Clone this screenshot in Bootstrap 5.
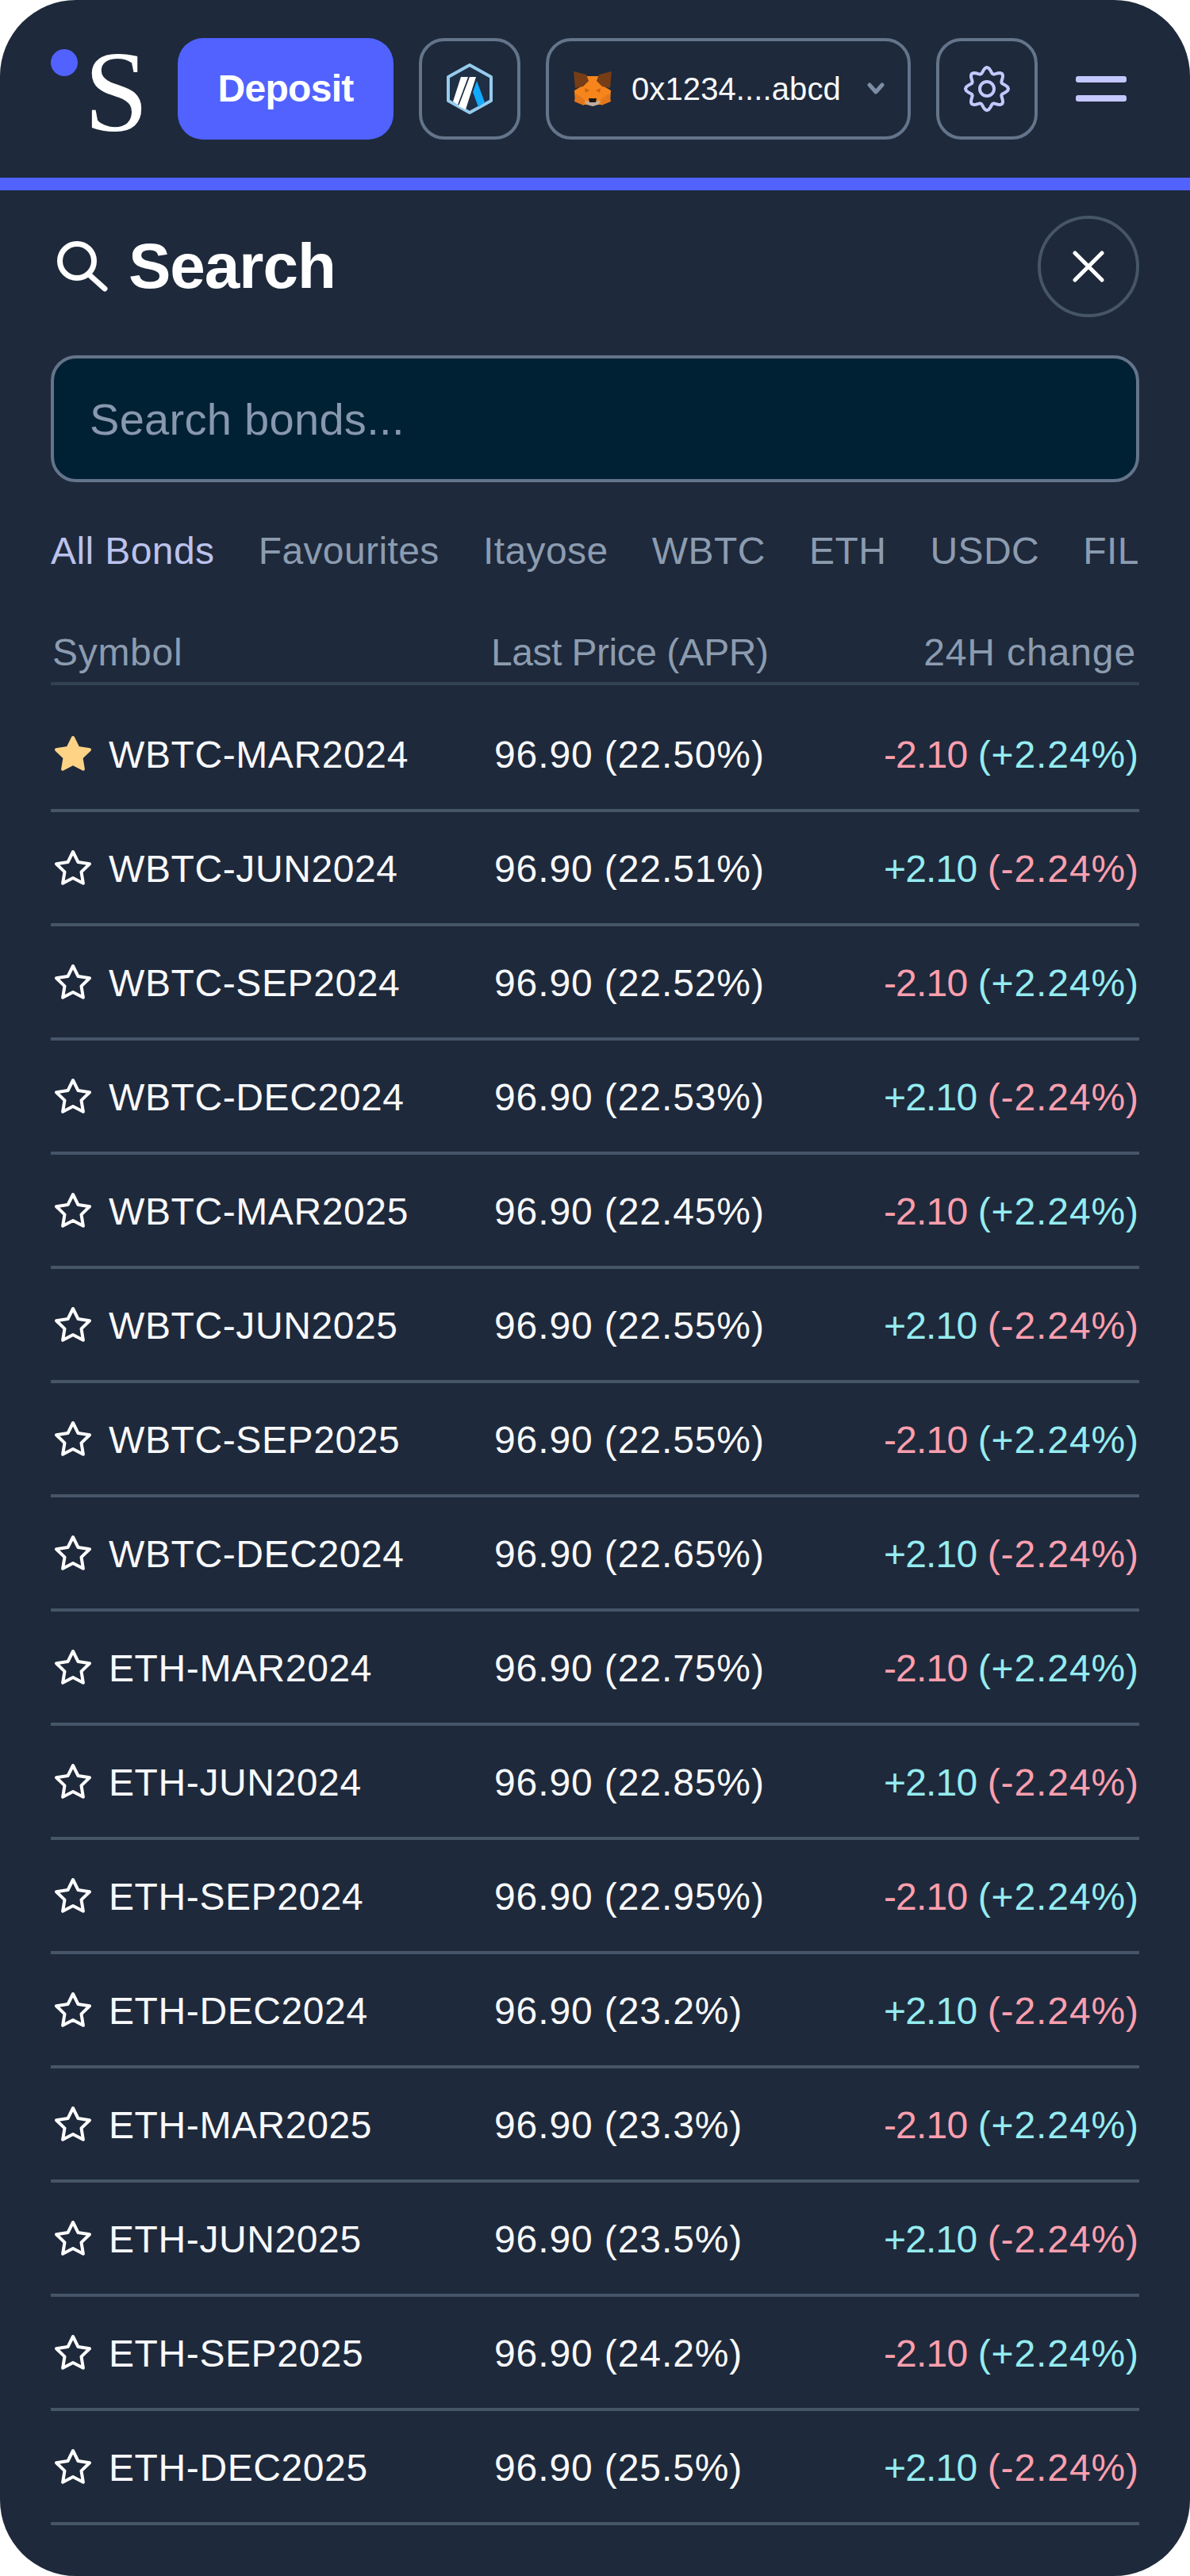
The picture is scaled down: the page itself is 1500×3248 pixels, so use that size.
<!DOCTYPE html>
<html lang="en">
<head>
    <meta charset="UTF-8">
    <meta name="viewport" content="width=device-width, initial-scale=1.0">
    <title>Search bonds</title>
    <link rel="stylesheet" href="https://cdn.jsdelivr.net/npm/bootstrap@5.3.0/dist/css/bootstrap.min.css">
    <style>
        body {
            background: #fff;
            font-family: "Liberation Sans", Arial, sans-serif;
            color: #f8f9fb;
        }
        .phone {
            width: 1500px;
            height: 3248px;
            background: #1e293b;
            border-radius: 96px;
            overflow: hidden;
        }
        .topbar {
            height: 240px;
            padding: 48px 64px 0;
            border-bottom: 16px solid #5162ff;
            gap: 32px;
        }
        .logo-box { width: 128px; height: 128px; }
        .logo-dot {
            width: 34px;
            height: 34px;
            background: #5162ff;
            border-radius: 50%;
            top: 14px;
            left: 0;
        }
        .logo-s {
            font-family: "Liberation Serif", serif;
            font-size: 146px;
            line-height: 128px;
            left: 42px;
            top: 4px;
            color: #fff;
        }
        .deposit-btn {
            width: 272px;
            height: 128px;
            background: #5162ff;
            border: 0;
            border-radius: 32px;
            color: #fff;
            font-size: 48px;
            font-weight: 700;
            letter-spacing: -.7px;
            padding: 0;
        }
        .outline-box {
            height: 128px;
            border: 4px solid #64748b;
            border-radius: 32px;
            flex: 0 0 auto;
        }
        .square-box { width: 128px; }
        .wallet-box {
            width: 460px;
            padding: 0 28px 0 31px;
            font-size: 40px;
        }
        .wallet-addr { margin-left: 25px; letter-spacing: .1px; }
        .menu-lines { width: 64px; gap: 16px; margin-left: 16px; }
        .menu-lines span {
            display: block;
            height: 8px;
            background: #c4c8ff;
            border-radius: 3px;
        }
        .panel { padding: 32px 64px 0; }
        .title-row { height: 128px; }
        .title-icon { margin-left: 8px; margin-right: 26px; }
        .title-text {
            font-size: 80px;
            font-weight: 700;
            letter-spacing: -1px;
            color: #fff;
            line-height: 1;
            margin: 0;
        }
        .close-box {
            width: 128px;
            height: 128px;
            border: 4px solid #475569;
            border-radius: 50%;
            background: none;
            padding: 0;
        }
        .search-input.form-control {
            height: 160px;
            margin-top: 48px;
            background: #002133;
            border: 4px solid #64748b;
            border-radius: 32px;
            padding: 0 45px;
            font-size: 56px;
            letter-spacing: .3px;
            color: #fff;
        }
        .search-input.form-control::placeholder { color: #8898ae; opacity: 1; }
        .filter-tabs {
            margin-top: 59px;
            height: 56px;
            font-size: 48px;
            line-height: 56px;
            letter-spacing: .4px;
            color: #8c9cb0;
        }
        .filter-tabs .on { color: #bcc2ec; }
        .list-head {
            margin-top: 72px;
            height: 69px;
            font-size: 48px;
            line-height: 56px;
            color: #8c9cb0;
            border-bottom: 4px solid #334155;
            margin-bottom: 16px;
        }
        .head-symbol { letter-spacing: .7px; padding-left: 2px; }
        .head-price { letter-spacing: -.5px; }
        .head-change { padding-right: 4px; letter-spacing: .9px; }
        .bond-row {
            height: 144px;
            border-bottom: 4px solid #475569;
            font-size: 48px;
            padding-top: 3px;
        }
        .bond-name { width: 555px; flex: none; }
        .bond-ticker { letter-spacing: .6px; }
        .bond-price { flex: 1 1 auto; padding-left: 4px; letter-spacing: .9px; }
        .star-icon { width: 48px; height: 48px; margin: -3px 21px 0 4px; flex: none; }
        .price-down { color: #fb9fae; }
        .price-up { color: #95ecf0; }
        .chg-num { letter-spacing: -.8px; }
        .chg-pct { letter-spacing: .9px; }
    </style>
</head>
<body class="m-0">

<div class="phone d-flex flex-column">
    <div class="topbar d-flex align-items-start">
        <div class="logo-box position-relative flex-shrink-0">
            <span class="logo-dot position-absolute"></span>
            <span class="logo-s position-absolute">S</span>
        </div>
        <button class="deposit-btn btn flex-shrink-0">Deposit</button>
        <div class="outline-box square-box d-flex align-items-center justify-content-center">
            <svg width="58" height="64" viewBox="0 0 58 64">
                <path d="M29 2 L56 17 V47 L29 62 L2 47 V17 Z" fill="#1f2f46" stroke="#96cbec" stroke-width="4" stroke-linejoin="round"/>
                <path d="M38 22 L48 49 L40 55 L33 36 Z" fill="#12aaff"/>
                <path d="M18 17 H27 L14 52 L8 48 Z M29 17 H37 L24 58 L15 54 Z" fill="#fff"/>
            </svg>
        </div>
        <div class="outline-box wallet-box d-flex align-items-center">
            <svg width="48" height="44" viewBox="0 0 48 44" class="flex-shrink-0">
                <path d="M14 6 H34 L40 20 L47 24 L46 38 L34 42 H14 L2 38 L1 24 L8 20 Z" fill="#f6851b"/>
                <path d="M0 0 L16 4 L19 12 L12 19 L2 21 Z M48 0 L32 4 L29 12 L36 19 L46 21 Z" fill="#763d16"/>
                <path d="M3 28 L1 38 L13 43 L14 36 Z M45 28 L47 38 L35 43 L34 36 Z" fill="#e4761b"/>
                <path d="M14 21 L20 24 L15 27 Z M34 21 L28 24 L33 27 Z" fill="#cd6116"/>
                <path d="M14 37 L20 38 H28 L34 37 L31 42 L24 44 L17 42 Z" fill="#c0ad9e"/>
                <path d="M19 34 H29 L28 39 H20 Z" fill="#161616"/>
            </svg>
            <span class="wallet-addr flex-grow-1">0x1234....abcd</span>
            <svg width="24" height="16" viewBox="0 0 24 16" class="flex-shrink-0">
                <path d="M4 3 L12 12 L20 3" fill="none" stroke="#7d8da3" stroke-width="5" stroke-linecap="round" stroke-linejoin="round"/>
            </svg>
        </div>
        <div class="outline-box square-box d-flex align-items-center justify-content-center">
            <svg width="60" height="60" viewBox="0 0 60 60" fill="none" stroke="#c4c8ff" stroke-width="4">
                <path id="gearPath"/>
                <circle cx="30" cy="30" r="9"/>
            </svg>
        </div>
        <div class="menu-lines d-flex flex-column flex-shrink-0 align-self-stretch justify-content-start pt-5">
            <span></span>
            <span></span>
        </div>
    </div>

    <div class="panel d-flex flex-column">
        <div class="title-row d-flex align-items-center justify-content-between">
            <div class="d-flex align-items-center">
                <svg class="title-icon" width="64" height="64" viewBox="0 0 64 64" fill="none" stroke="#fff" stroke-width="7" stroke-linecap="round">
                    <circle cx="25" cy="25" r="21.5"/>
                    <path d="M40 42 L60 60"/>
                </svg>
                <h1 class="title-text">Search</h1>
            </div>
            <button class="close-box d-flex align-items-center justify-content-center">
                <svg width="40" height="40" viewBox="0 0 40 40" stroke="#fff" stroke-width="5" stroke-linecap="round">
                    <path d="M3 3 L37 37 M37 3 L3 37"/>
                </svg>
            </button>
        </div>

        <input class="search-input form-control" type="text" placeholder="Search bonds...">

        <div class="filter-tabs d-flex justify-content-between">
            <span class="on">All Bonds</span>
            <span>Favourites</span>
            <span>Itayose</span>
            <span>WBTC</span>
            <span>ETH</span>
            <span>USDC</span>
            <span>FIL</span>
        </div>

        <div class="list-head d-flex">
            <span class="bond-name head-symbol">Symbol</span>
            <span class="head-price flex-grow-1">Last Price (APR)</span>
            <span class="head-change">24H change</span>
        </div>

        <div id="bondList"></div>
    </div>
</div>

<script>
    const bonds = [
        ['WBTC-MAR2024', '22.50%'], ['WBTC-JUN2024', '22.51%'], ['WBTC-SEP2024', '22.52%'], ['WBTC-DEC2024', '22.53%'],
        ['WBTC-MAR2025', '22.45%'], ['WBTC-JUN2025', '22.55%'], ['WBTC-SEP2025', '22.55%'], ['WBTC-DEC2024', '22.65%'],
        ['ETH-MAR2024', '22.75%'], ['ETH-JUN2024', '22.85%'], ['ETH-SEP2024', '22.95%'], ['ETH-DEC2024', '23.2%'],
        ['ETH-MAR2025', '23.3%'], ['ETH-JUN2025', '23.5%'], ['ETH-SEP2025', '24.2%'], ['ETH-DEC2025', '25.5%']
    ];
    const starPath = 'M24 4 L30.5 17.1 L45 19.2 L34.5 29.4 L36.9 43.8 L24 37 L11.1 43.8 L13.5 29.4 L3 19.2 L17.5 17.1 Z';

    // wavy outline of the settings cog, eight bumps
    let gear = '';
    for (let a = 0; a < 360; a += 5) {
        const rad = a * Math.PI / 180;
        const r = 23.5 + 3.5 * Math.cos(8 * rad);
        gear += (a === 0 ? 'M' : 'L') + (30 + r * Math.sin(rad)).toFixed(2) + ' ' + (30 - r * Math.cos(rad)).toFixed(2) + ' ';
    }
    document.getElementById('gearPath').setAttribute('d', gear + 'Z');

    // one row per bond, odd rows are down, even rows are up
    document.getElementById('bondList').innerHTML = bonds.map((bond, i) => {
        const starAttrs = i === 0 ? 'fill="#fed385" stroke="#fed385"' : 'fill="none" stroke="#fff"';
        const change = i % 2 === 0
            ? '<span class="price-down chg-num">-2.10</span> <span class="price-up chg-pct">(+2.24%)</span>'
            : '<span class="price-up chg-num">+2.10</span> <span class="price-down chg-pct">(-2.24%)</span>';
        return `
            <div class="bond-row d-flex align-items-center">
                <div class="bond-name d-flex align-items-center">
                    <svg class="star-icon" viewBox="0 0 48 48" ${starAttrs} stroke-width="4" stroke-linejoin="round"><path d="${starPath}"/></svg>
                    <span class="bond-ticker">${bond[0]}</span>
                </div>
                <div class="bond-price">96.90 (${bond[1]})</div>
                <div>${change}</div>
            </div>`;
    }).join('');
</script>

<script src="https://cdn.jsdelivr.net/npm/bootstrap@5.3.0/dist/js/bootstrap.bundle.min.js"></script>
</body>
</html>
